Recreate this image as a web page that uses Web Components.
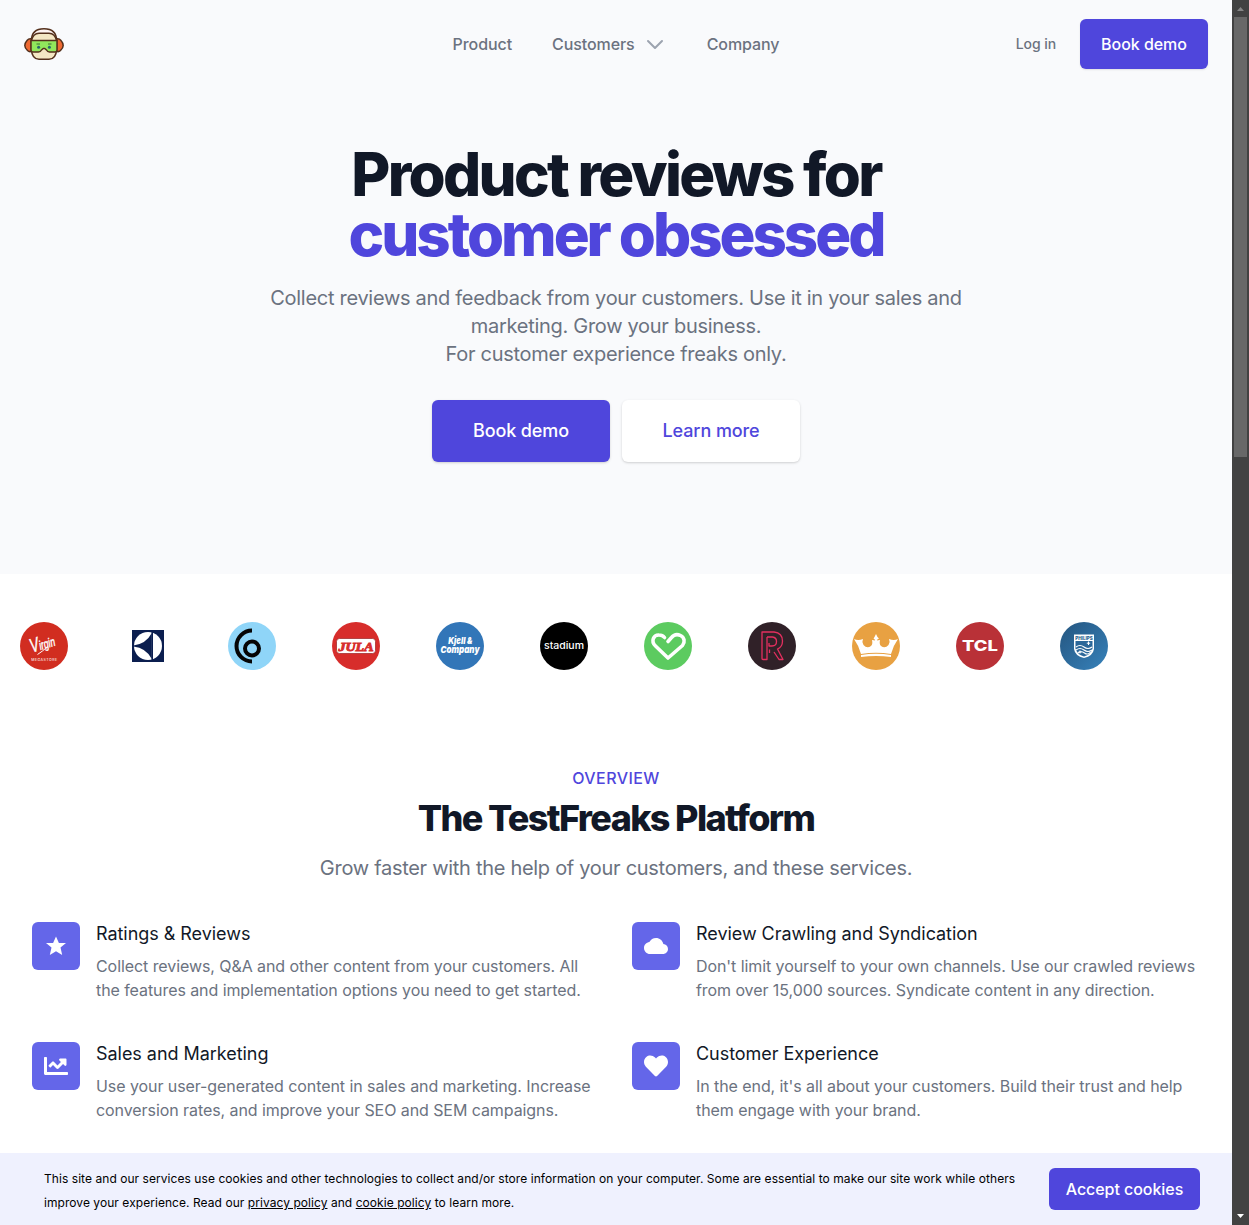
<!DOCTYPE html>
<html lang="en">
<head>
<meta charset="utf-8">
<title>TestFreaks</title>
<style>
html,body{margin:0;height:100%;overflow:hidden}
body{font-family:Inter,"Liberation Sans",sans-serif;color:#6b7280;background:#fff;font-size:16px;line-height:24px}
</style>
</head>
<body>
<tf-app></tf-app>
<script>
function define(name, html) {
  const tpl = document.createElement('template');
  tpl.innerHTML = html;
  customElements.define(name, class extends HTMLElement {
    constructor() {
      super();
      this.attachShadow({mode: 'open'}).append(tpl.content.cloneNode(true));
    }
  });
}

define('tf-mascot', `<style>:host{display:block;width:40px;height:40px}svg{display:block}</style>
<svg width="40" height="40" viewBox="0 0 40 40" fill="none" stroke="#54301c" stroke-width="1.5" stroke-linejoin="round">
<path d="M8 15Q5 14 3 16.500Q.8 19 .8 21.500T3.500 26.500Q5.500 28.500 8 27Z" fill="#ee6932"/>
<path d="M32 15Q35 14 37 16.500Q39.200 19 39.200 21.500T36.500 26.500Q34.500 28.500 32 27Z" fill="#ee6932"/>
<path d="M7.300 17Q7.500 4.700 20 4.700T32.700 17" stroke-width="1.600" fill="#fff5f3"/>
<path d="M7.300 17Q9 9.500 15 9.300H25Q31 9.500 32.700 17V25Q32 35.300 25 35.300H15Q8 35.300 7.300 25Z" fill="#f4e7c4"/>
<path d="M7 16.600H33V26Q33 28 31 28H25.500Q23.500 28 22.500 26L20.800 24.500H19.200L17.500 26Q16.500 28 14.500 28H9Q7 28 7 26Z" fill="#91e75c"/>
<path d="M12.500 20H16M24 20H27.500" stroke="#3d7332" stroke-width="1"/><g fill="#27666c" stroke="none"><circle cx="14.600" cy="23.300" r="1.500"/><circle cx="25.400" cy="23.300" r="1.500"/></g>
</svg>`);

define('tf-button', `<style>
:host{display:flex;box-sizing:border-box;align-items:center;justify-content:center;height:50px;border-radius:6px;background:#4f46dc;color:#fff;font-weight:550;letter-spacing:-.05px;white-space:nowrap;box-shadow:0 1px 2px rgba(0,0,0,.1)}
:host([size=lg]){width:178px;height:62px;font-size:18px;letter-spacing:-.12px;box-shadow:0 1px 3px rgba(0,0,0,.12),0 1px 2px rgba(0,0,0,.06)}
:host([tone=light]){background:#fff;color:#4f46dc;font-weight:500;letter-spacing:-.08px!important}
:host([size=bar]){height:42px;width:151px;box-shadow:none}
:host([size=nav]){width:128px}
</style><slot></slot>`);

define('tf-header', `<style>
:host{display:grid;grid-template-columns:1fr auto 1fr;align-items:center;height:88px;padding:0 24px;font-weight:500;letter-spacing:-.08px}
nav{display:flex;gap:40px}
nav span{display:flex;align-items:center}
svg{margin-left:8px}
.r{display:flex;align-items:center;justify-content:flex-end;gap:24px;font-size:14px;font-weight:450}
tf-button{font-size:16px}
</style>
<tf-mascot></tf-mascot>
<nav><span>Product</span><span>Customers<svg width="24" height="24" viewBox="0 0 24 24" fill="none" stroke="#9ca3af" stroke-width="2" stroke-linecap="round" stroke-linejoin="round"><path d="M5 9l7 7 7-7"/></svg></span><span>Company</span></nav>
<div class="r"><span>Log in</span><tf-button size="nav">Book demo</tf-button></div>`);

define('tf-hero', `<style>
:host{display:flex;flex-direction:column;align-items:center;padding-top:56px;height:486px;box-sizing:border-box;text-align:center}
h1{margin:0;font-size:60px;line-height:60px;font-weight:800;letter-spacing:-2.700px;color:#111827}
h1 span{display:block;letter-spacing:-3.050px;color:#4f46dc}
p{margin:20px 0 32px;width:720px;font-size:20px;line-height:28px;letter-spacing:-.29px}
div{display:flex;gap:12px}
</style>
<h1>Product reviews for<span>customer obsessed</span></h1>
<p>Collect reviews and feedback from your customers. Use it in your sales and<br>marketing. Grow your business.<br>For customer experience freaks only.</p>
<div><tf-button size="lg">Book demo</tf-button><tf-button size="lg" tone="light">Learn more</tf-button></div>`);

define('tf-brands', `<style>
:host{display:flex;gap:56px;padding:48px 20px}
svg{display:block;flex:none;overflow:visible}
text{font-family:Inter,"Liberation Sans",sans-serif;fill:#fff;text-anchor:middle}
</style>
<svg width="48" height="48"><circle cx="24" cy="24" r="24" fill="#d12d20"/><text transform="translate(24 27) rotate(-17) scale(.74 1.1)" style="font:italic 11.500px 'Liberation Sans',sans-serif;stroke:#fff;stroke-width:.4"><tspan font-size="18">V</tspan>irgin</text><path d="M17.500 32.500Q23 29 27 25" fill="none" stroke="#fff" stroke-width="1"/><text x="24.200" y="39.300" textLength="26" style="font-size:3.600px;font-weight:500;opacity:.85">MEGASTORE</text></svg>
<svg width="48" height="48"><path fill="#0b1e4f" d="M8 8h32v32H8z"/><circle cx="24" cy="24" r="14" fill="#fff"/><path d="M27.500 9.500V38.500H29V9.500Z" fill="#0b1e4f"/><path d="M9.500 23.400Q22 22 27.800 11V37Q22 26 9.500 24.600Z" fill="#0b1e4f"/></svg>
<svg width="48" height="48"><circle cx="24" cy="24" r="24" fill="#8fd5f8"/><g fill="none" stroke="#050505" stroke-width="4"><path d="M24 8.500A15.500 15.500 0 0 0 24 39.500"/><circle cx="24" cy="26.500" r="7"/></g></svg>
<svg width="48" height="48"><circle cx="24" cy="24" r="24" fill="#d72d2b"/><rect x="4.500" y="16.500" width="39" height="15" rx="3" fill="#fff" stroke="#982322" stroke-width=".7"/><text x="24" y="28.500" textLength="35" lengthAdjust="spacingAndGlyphs" style="font:italic bold 13px 'Liberation Serif',serif;fill:#d72d2b;stroke:#d72d2b;stroke-width:.9">JULA</text></svg>
<svg width="48" height="48"><circle cx="24" cy="24" r="24" fill="#3276b8"/><text x="24.300" y="21.500" textLength="24" lengthAdjust="spacingAndGlyphs" style="font-style:italic;font-weight:900;font-size:9.500px">Kjell &amp;</text><text x="24" y="31" textLength="39" lengthAdjust="spacingAndGlyphs" style="font-style:italic;font-weight:900;font-size:9.500px">Company</text></svg>
<svg width="48" height="48"><circle cx="24" cy="24" r="24"/><text x="24" y="27.200" textLength="40" lengthAdjust="spacingAndGlyphs" style="font-weight:550;font-size:9.500px">stadium</text></svg>
<svg width="48" height="48"><circle cx="24" cy="24" r="24" fill="#5ccb60"/><path d="M24 19.500L27.500 15.500C30 12.500 33.500 12 36.500 13.500C40.500 15.500 41.300 20 38.500 23.500L24 36L11.500 24C6.500 19 9.500 12.800 15 13Q18.500 13 20.500 15.500" fill="none" stroke="#fff" stroke-width="3.600" stroke-linecap="round" stroke-linejoin="round"/></svg>
<svg width="48" height="48"><circle cx="24" cy="24" r="24" fill="#302128"/><g fill="none" stroke="#e42f5f" stroke-width="1.300" stroke-linejoin="round"><path d="M19 15V37.500H15Q14 37.500 14 36.500V10H26Q34.500 11 34.500 19Q34.500 25 29.500 27L35 37.500H31L26 30M19 15H24.500Q28.500 15.500 28.500 19.500Q28.500 24 24 24H21V21M21.500 31V27.500"/></g></svg>
<svg width="48" height="48"><circle cx="24" cy="24" r="24" fill="#e8a142"/><path d="M2 17Q6 19 11 17Q9.500 20 11.500 23Q15 27 19 24Q21 22 20 18L23 18.500Q23 17 21.500 16.500L22.500 15L24 12L25.500 15L27 16.500Q25 17 25 18.500L28 18Q27 22 29 24Q33 27 36.500 23Q38.500 20 37 17Q42 19 46 17Q41 24 39 32Q24 29.500 9 32Q7 24 2 17ZM9 33Q24 30.500 39 33V35Q24 33 9 35Z" fill="#fff"/></svg>
<svg width="48" height="48"><circle cx="24" cy="24" r="24" fill="#b93137"/><text x="24" y="29.200" textLength="36" lengthAdjust="spacingAndGlyphs" style="font-weight:800;font-size:14.500px">TCL</text></svg>
<svg width="48" height="48"><defs><linearGradient id="p" x1="0" y1="0" x2="1" y2="1"><stop stop-color="#24557f"/><stop offset="1" stop-color="#3782bb"/></linearGradient></defs><circle cx="24" cy="24" r="24" fill="url(#p)"/><path d="M14 12.500H34V27Q33 34 24 36Q15 34 14 27Z" fill="#fff"/><text x="24" y="18" textLength="17.500" lengthAdjust="spacingAndGlyphs" style="font-size:4.500px;font-weight:800;fill:#245d8c">PHILIPS</text><path d="M15.500 19H32.500V26.500Q31 32.500 24 34.500Q17 32.500 15.500 26.500Z" fill="#2b6799"/><path d="M16 25Q20 22 24 25T32 25M16 28Q20 25 24 28T32 28M18 31Q21 28.500 24.500 31T30.500 30" stroke="#fff" stroke-width="1.100" fill="none"/><path d="M28.500 19.500v3.500M26.800 21.200h3.400M20 28.500v3M18.500 30h3" stroke="#fff" stroke-width="1"/></svg>`);

define('tf-feature', `<style>
:host{display:flex;gap:16px}
.i{flex:none;display:flex;align-items:center;justify-content:center;width:48px;height:48px;border-radius:6px;background:#6466e9;color:#fff}
h3{margin:0 0 8px;font-weight:400;font-size:18px;line-height:24px;letter-spacing:-.04px;color:#111827}
p{margin:0;letter-spacing:-.075px}
</style><div class="i"><slot name="icon"></slot></div><div><h3><slot name="title"></slot></h3><p><slot></slot></p></div>`);

define('tf-overview', `<style>
:host{display:block;padding:48px 32px 0;text-align:center}
.k{font-weight:500;letter-spacing:.44px;color:#4f46dc}
h2{margin:8px 0 16px;font-size:36px;line-height:40px;font-weight:800;letter-spacing:-1.650px;color:#111827}
.s{font-size:20px;line-height:28px;letter-spacing:-.29px}
.g{display:grid;grid-template-columns:1fr 1fr;gap:40px 32px;margin-top:40px;text-align:left}
svg{display:block}
</style>
<div class="k">OVERVIEW</div><h2>The TestFreaks Platform</h2><div class="s">Grow faster with the help of your customers, and these services.</div>
<div class="g">
<tf-feature><svg slot="icon" width="24" height="24" viewBox="0 0 24 24" fill="currentColor"><path d="M12 2.500L14.900 9H22L16.500 13.600L18.200 20.900L12 17.200L5.800 20.900L7.500 13.600L2 9H9.100Z"/></svg><span slot="title">Ratings &amp; Reviews</span>Collect reviews, Q&amp;A and other content from your customers. All the features and implementation options you need to get started.</tf-feature>
<tf-feature><svg slot="icon" width="24" height="24" viewBox="0 0 24 24" fill="currentColor"><path d="M19.350 10.040C18.670 6.590 15.640 4 12 4 9.110 4 6.600 5.640 5.350 8.040 2.340 8.360 0 10.910 0 14c0 3.310 2.690 6 6 6h13c2.760 0 5-2.240 5-5 0-2.640-2.050-4.780-4.650-4.960z"/></svg><span slot="title">Review Crawling and Syndication</span>Don't limit yourself to your own channels. Use our crawled reviews from over 15,000 sources. Syndicate content in any direction.</tf-feature>
<tf-feature><svg slot="icon" width="24" height="24" viewBox="0 0 512 512" fill="currentColor"><path d="M496 384H64V80c0-8.840-7.160-16-16-16H16C7.160 64 0 71.160 0 80v336c0 17.670 14.330 32 32 32h464c8.840 0 16-7.160 16-16v-32c0-8.840-7.160-16-16-16zM464 96H345.940c-21.380 0-32.090 25.850-16.970 40.970l32.400 32.400L288 242.750l-73.370-73.370c-12.500-12.500-32.760-12.500-45.250 0l-68.690 68.690c-6.250 6.250-6.250 16.380 0 22.630l22.620 22.620c6.250 6.250 16.380 6.250 22.630 0L192 237.250l73.370 73.370c12.500 12.500 32.760 12.500 45.250 0l96-96 32.400 32.400c15.120 15.120 40.970 4.410 40.970-16.970V112c.010-8.840-7.150-16-15.990-16z"/></svg><span slot="title">Sales and Marketing</span>Use your user-generated content in sales and marketing. Increase conversion rates, and improve your SEO and SEM campaigns.</tf-feature>
<tf-feature><svg slot="icon" width="24" height="24" viewBox="0 0 512 512" fill="currentColor"><path d="M462.300 62.600C407.500 15.900 326 24.300 275.700 76.200L256 96.500l-19.700-20.300C186.100 24.300 104.500 15.900 49.700 62.600c-62.800 53.600-66.100 149.800-9.900 207.900l193.500 199.800c12.500 12.900 32.800 12.900 45.300 0l193.500-199.800c56.300-58.100 53-154.300-9.800-207.900z"/></svg><span slot="title">Customer Experience</span>In the end, it's all about your customers. Build their trust and help them engage with your brand.</tf-feature>
</div>`);

define('tf-cookies', `<style>
:host{display:flex;align-items:center;justify-content:space-between;padding:0 32px 0 44px;background:#eff1fe;font-size:12px;color:#000}
p{margin:4px 0 0;width:990px;letter-spacing:.056px}
tf-button{font-size:16px}
</style><p>This site and our services use cookies and other technologies to collect and/or store information on your computer. Some are essential to make our site work while others improve your experience. Read our <u>privacy policy</u> and <u>cookie policy</u> to learn more.</p><tf-button size="bar">Accept cookies</tf-button>`);

define('tf-scrollbar', `<style>
:host{display:flex;flex-direction:column;align-items:center;background:#424242}
.t{width:13px;height:440px;background:#686868;margin-bottom:auto}
svg{display:block}
</style><svg width="17" height="17"><path d="M5 11h7L8.500 7z" fill="#868686"/></svg><div class="t"></div><svg width="17" height="17"><path d="M5 6h7L8.500 10z" fill="#fff"/></svg>`);

define('tf-app', `<style>
:host{display:grid;grid-template-columns:1fr 17px;grid-template-rows:1153px 72px;height:1225px}
main{overflow:hidden;min-width:0}
section{background:#f9fafc}
tf-scrollbar{grid-column:2;grid-row:1/3}
tf-cookies{grid-column:1;grid-row:2}
</style><main><section><tf-header></tf-header><tf-hero></tf-hero></section><tf-brands></tf-brands><tf-overview></tf-overview></main><tf-scrollbar></tf-scrollbar><tf-cookies></tf-cookies>`);
</script>
</body>
</html>
